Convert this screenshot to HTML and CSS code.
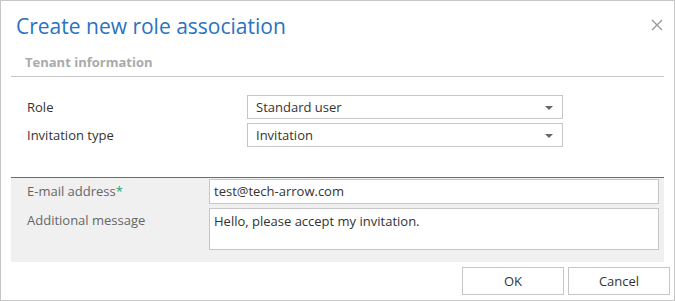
FILE: index.html
```html
<!DOCTYPE html>
<html lang="en">
<head>
  <meta charset="UTF-8" />
  <title>Create new role association</title>
  <link rel="stylesheet" href="styles.css">
</head>
<body>

  <div class="dialog">
    <div class="dialog-header">
      <h1>Create new role association</h1>
      <button class="close" type="button" aria-label="Close">
        <svg width="12" height="12" viewBox="0 0 12 12">
          <path d="M1 1 L11 11 M11 1 L1 11" stroke="#9a9a9a" stroke-width="1.4" fill="none"/>
        </svg>
      </button>
    </div>

    <div class="section-title">Tenant information</div>

    <div class="form-rows">
      <div class="form-row">
        <label>Role</label>
        <div class="select">
          <span>Standard user</span>
          <i class="arrow"></i>
        </div>
      </div>
      <div class="form-row">
        <label>Invitation type</label>
        <div class="select">
          <span>Invitation</span>
          <i class="arrow"></i>
        </div>
      </div>
    </div>

    <div class="invite-box">
      <div class="form-row">
        <label>E-mail address<span class="req">*</span></label>
        <div class="input">test@tech-arrow.com</div>
      </div>
      <div class="form-row">
        <label>Additional message</label>
        <div class="input textarea">Hello, please accept my invitation.</div>
      </div>
    </div>

    <div class="dialog-footer">
      <button type="button">OK</button>
      <button type="button">Cancel</button>
    </div>
  </div>

</body>
</html>
```

FILE: styles.css
```css
* {
  box-sizing: border-box;
  margin: 0;
  padding: 0;
}

body {
  font-family: "Open Sans", "Noto Sans", sans-serif;
  font-size: 13px;
  color: #333;
  background: #fff;
}

.dialog {
  width: 675px;
  height: 301px;
  border: 1px solid #c6c6c6;
  display: flex;
  flex-direction: column;
}

.dialog-header {
  display: flex;
  justify-content: space-between;
  align-items: flex-start;
  padding: 11px 11px 0 15px;
  height: 51px;
}

.dialog-header h1 {
  font-weight: 400;
  font-size: 21px;
  color: #2a72c2;
  line-height: 28px;
}

.close {
  background: none;
  border: none;
  margin-top: 7px;
  width: 12px;
  height: 12px;
  cursor: pointer;
}

.close svg {
  display: block;
}

.section-title {
  margin: 0 10px;
  padding: 0 0 4px 14px;
  border-bottom: 1px solid #c6c6c6;
  font-size: 13px;
  font-weight: 700;
  color: #aaa;
  line-height: 20px;
}

.form-rows {
  display: flex;
  flex-direction: column;
  gap: 4px;
  padding: 18px 0 0 26px;
  height: 100px;
}

.form-row {
  display: flex;
  align-items: flex-start;
}

.form-row label {
  width: 220px;
  line-height: 24px;
}

.select {
  position: relative;
  width: 316px;
  height: 24px;
  border: 1px solid #c6c6c6;
  padding: 0 8px;
  line-height: 22px;
}

.arrow {
  position: absolute;
  right: 9px;
  top: 10px;
  border-left: 4px solid transparent;
  border-right: 4px solid transparent;
  border-top: 4px solid #666;
}

.invite-box {
  margin: 0 10px;
  background: #f0f0f0;
  box-shadow: inset 0 1px 0 #1683e0;
  padding: 2px 5px 12px 16px;
  display: flex;
  flex-direction: column;
  gap: 4px;
}

.invite-box label {
  width: 182px;
  color: #666;
  line-height: 25px;
}

.req {
  color: #2a9d6a;
}

.input {
  flex: 1;
  height: 25px;
  background: #fff;
  border: 1px solid #c6c6c6;
  padding: 0 4px;
  line-height: 23px;
}

.textarea {
  height: 42px;
  padding-top: 2px;
  line-height: 20px;
}

.dialog-footer {
  display: flex;
  justify-content: flex-end;
  gap: 4px;
  padding: 5px 4px 0 0;
}

.dialog-footer button {
  width: 102px;
  height: 28px;
  background: #fff;
  border: 1px solid #c6c6c6;
  font-family: inherit;
  font-size: 13px;
  color: #333;
  cursor: pointer;
}
```
